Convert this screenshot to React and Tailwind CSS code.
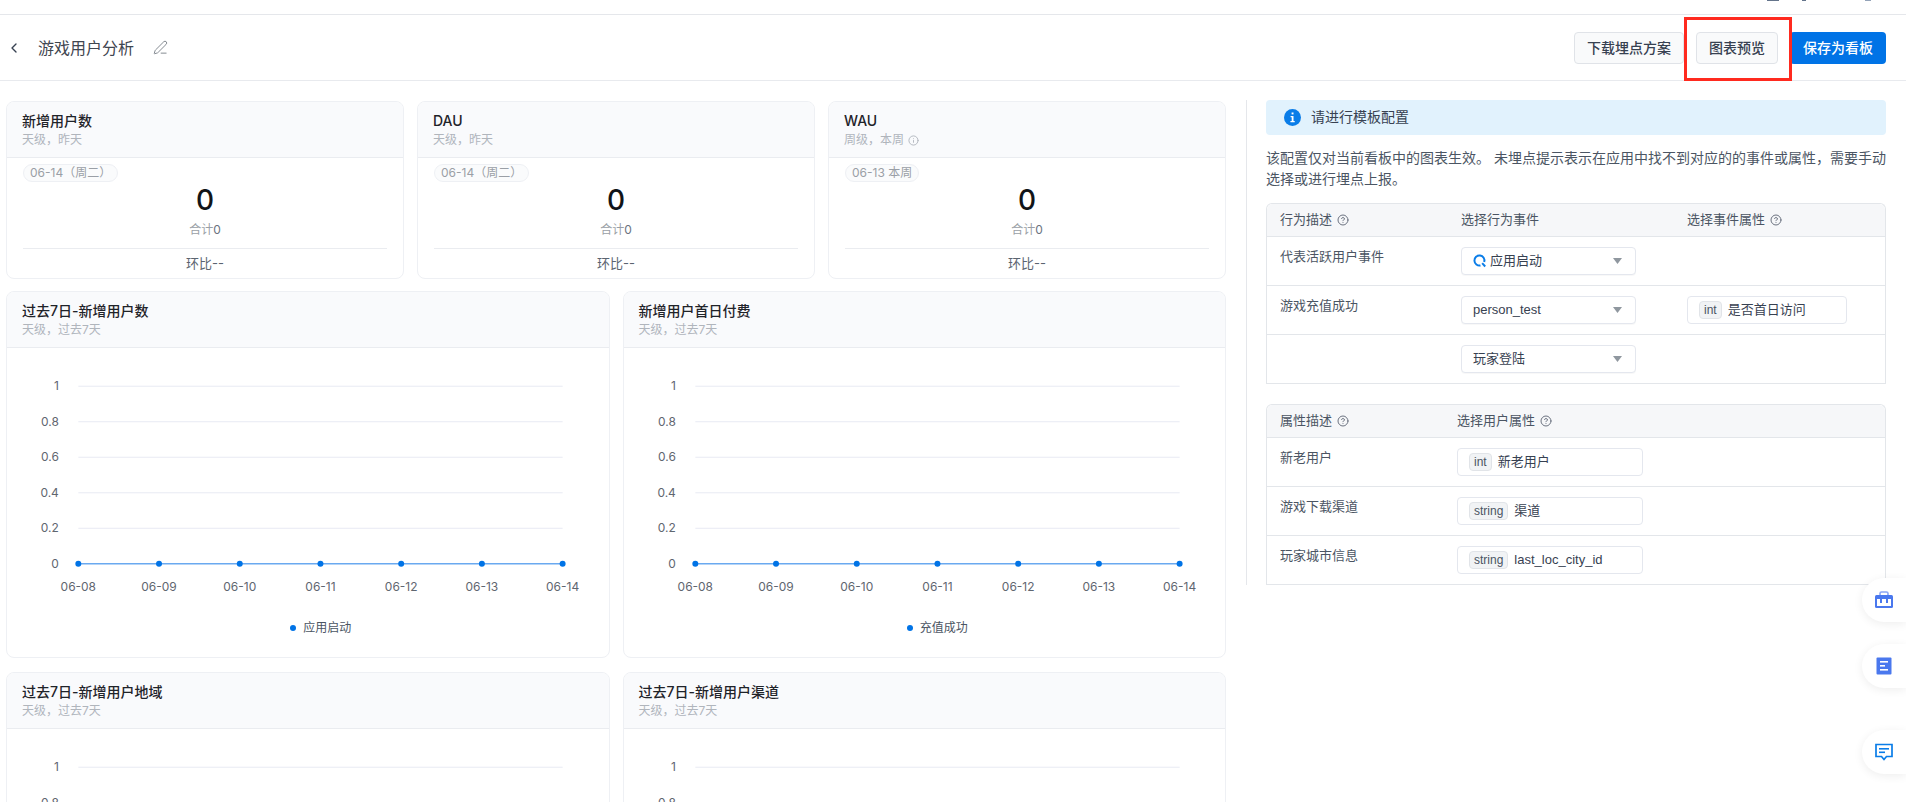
import React from 'react';
import { ChevronLeft, PenLine, CircleHelp, Info } from 'lucide-react';

const days = ['06-08', '06-09', '06-10', '06-11', '06-12', '06-13', '06-14'];
const ticks = ['1', '0.8', '0.6', '0.4', '0.2', '0'];

const StatCard = ({ title, sub, tag, hint }) => (
  <div className="h-[178px] rounded-lg border border-[#eef0f4] bg-white overflow-hidden">
    <div className="h-[56px] border-b border-[#eaecf0] bg-[#f9fafc] pl-[15px] pt-[9px]">
      <div className="text-[14px] leading-[20px] font-medium text-[#1f2329]">{title}</div>
      <div className="flex items-center gap-1 text-[12px] leading-[18px] text-[#b0b5bc]">
        {sub}
        {hint && <Info size={11} className="text-[#b0b5bc]" />}
      </div>
    </div>
    <div className="px-[16px] pt-[6px]">
      <div className="flex h-[18px] w-fit items-center rounded-full border border-[#eef0f4] bg-[#fafbfc] px-[6px] text-[12px] text-[#9a9fa6]">
        {tag}
      </div>
      <div className="-mt-[1px] text-center text-[28px] leading-[38px] font-medium text-[#111418]">0</div>
      <div className="mt-[2px] text-center text-[12px] leading-[18px] text-[#9a9fa6]">
        合计<span className="text-[#6b7280]">0</span>
      </div>
      <div className="mt-[9px] border-t border-[#eaecf0] pt-[4px] text-center text-[13px] leading-[20px] text-[#5b6470]">
        环比--
      </div>
    </div>
  </div>
);

const LineChart = () => {
  const left = 71.5;
  const right = 557;
  const top = 38;
  const step = 35.6;
  const gap = (right - left) / 6;
  return (
    <svg width="100%" height="266" viewBox="0 0 603 266" className="block">
      {ticks.map((t, i) => (
        <g key={t}>
          <text x="52" y={top + i * step + 4} textAnchor="end" fontSize="12" fill="#5f6670">{t}</text>
          {i < 5 && <line x1={left} x2={right} y1={top + i * step} y2={top + i * step} stroke="#e8eaf3" />}
        </g>
      ))}
      <line x1={left} x2={right} y1={top + 5 * step} y2={top + 5 * step} stroke="#6aa9f0" strokeWidth="1.5" />
      {days.map((d, i) => (
        <g key={d}>
          <circle cx={left + i * gap} cy={top + 5 * step} r="3" fill="#0073e6" />
          <text x={left + i * gap} y="243" textAnchor="middle" fontSize="12" fill="#5f6670">{d}</text>
        </g>
      ))}
    </svg>
  );
};

const ChartCard = ({ title, legend }) => (
  <div className="h-[367px] rounded-lg border border-[#eef0f4] bg-white overflow-hidden">
    <div className="h-[56px] border-b border-[#eaecf0] bg-[#f9fafc] pl-[15px] pt-[9px]">
      <div className="text-[14px] leading-[20px] font-medium text-[#1f2329]">{title}</div>
      <div className="text-[12px] leading-[18px] text-[#b0b5bc]">天级，过去7天</div>
    </div>
    <LineChart />
    <div className="mt-[4px] flex items-center justify-center gap-[7px] pl-[26px] text-[12px] leading-[20px] text-[#4b5563]">
      <span className="h-[6px] w-[6px] rounded-full bg-[#0073e6]"></span>
      {legend}
    </div>
  </div>
);

const Caret = () => (
  <svg width="9" height="6" viewBox="0 0 9 6" className="ml-auto">
    <path d="M0 0h9L4.5 6z" fill="#8f979f" />
  </svg>
);

const Select = ({ children }) => (
  <div className="flex h-[28px] w-[175px] items-center rounded border border-[#e4e7ee] bg-white pl-[11px] pr-[13px] text-[13px] text-[#374151] shadow-[0_1px_1px_rgba(0,0,0,0.03)]">
    {children}
    <Caret />
  </div>
);

const TypedInput = ({ type, name, width }) => (
  <div className={`flex h-[28px] items-center gap-[6px] rounded border border-[#e4e7ee] bg-white pl-[11px] text-[13px] text-[#374151] ${width}`}>
    <span className="flex h-[18px] items-center rounded-sm border border-[#e1e4e8] bg-[#f1f3f5] px-[4px] text-[12px] text-[#4b5563]">
      {type}
    </span>
    {name}
  </div>
);

const Help = ({ label }) => (
  <span className="flex items-center gap-[5px]">
    {label}
    <CircleHelp size={12} className="text-[#6b7280]" />
  </span>
);

const FloatButton = ({ children, className }) => (
  <div className={`absolute right-0 flex h-[44px] w-[44px] items-center rounded-l-[22px] bg-white pl-[12px] shadow-[0_2px_10px_rgba(0,0,0,0.07)] ${className}`}>
    {children}
  </div>
);

export default function App() {
  return (
    <div className="relative h-[802px] w-[1906px] overflow-hidden bg-white font-['Inter','Noto_Sans_CJK_SC',sans-serif]">
      {/* Cut off nav bar */}
      <div className="flex h-[15px] items-start justify-end border-b border-[#e5e7eb] pr-[35px]">
        <span className="h-[1px] w-[12px] bg-[#64748b]"></span>
        <span className="ml-[23px] h-[1px] w-[4px] bg-[#64748b]"></span>
        <span className="ml-[59px] h-[1px] w-[6px] bg-[#94a3b8]"></span>
      </div>

      {/* Header */}
      <div className="flex h-[66px] items-center border-b border-[#e8eaee] pr-[20px]">
        <ChevronLeft size={16} className="ml-[6px] text-[#374151]" />
        <span className="ml-[16px] text-[16px] text-[#3f4650]">游戏用户分析</span>
        <PenLine size={15} strokeWidth={1.5} className="ml-[19px] text-[#7d838b]" />
        <div className="ml-auto flex items-center gap-[12px]">
          <button className="h-[32px] w-[110px] rounded border border-[#e0e3e8] bg-[#f9fafb] text-[14px] font-medium text-[#374151]">
            下载埋点方案
          </button>
          <div className="relative">
            <button className="h-[32px] w-[82px] rounded border border-[#e0e3e8] bg-[#f9fafb] text-[14px] font-medium text-[#374151]">
              图表预览
            </button>
            <div className="absolute -left-[12px] -top-[15px] z-10 h-[64px] w-[108px] border-[3px] border-[#ff2a1f]"></div>
          </div>
          <button className="h-[32px] w-[96px] rounded bg-[#0073e6] text-[14px] font-medium text-white">
            保存为看板
          </button>
        </div>
      </div>

      {/* Body */}
      <div className="flex pl-[6px] pt-[20px]">
        <div className="w-[1220px] shrink-0">
          <div className="grid grid-cols-3 gap-[13px]">
            <StatCard title="新增用户数" sub="天级，昨天" tag="06-14（周二）" />
            <StatCard title="DAU" sub="天级，昨天" tag="06-14（周二）" />
            <StatCard title="WAU" sub="周级，本周" tag="06-13 本周" hint />
          </div>
          <div className="mt-[12px] grid grid-cols-2 gap-[13px]">
            <ChartCard title="过去7日-新增用户数" legend="应用启动" />
            <ChartCard title="新增用户首日付费" legend="充值成功" />
          </div>
          <div className="mt-[14px] grid grid-cols-2 gap-[13px]">
            <ChartCard title="过去7日-新增用户地域" legend="应用启动" />
            <ChartCard title="过去7日-新增用户渠道" legend="应用启动" />
          </div>
        </div>

        {/* Template config */}
        <div className="ml-[20px] -mt-[1px] h-[485px] w-[640px] border-l border-[#e5e7eb] pl-[19px] font-['Liberation_Sans','Noto_Sans_CJK_SC',sans-serif]">
          <div className="flex h-[35px] items-center rounded-sm bg-[#e1f2fd] pl-[18px] text-[14px] text-[#374151]">
            <svg width="17" height="17" viewBox="0 0 17 17" className="mr-[10px]">
              <circle cx="8.5" cy="8.5" r="8.5" fill="#0a7de8" />
              <rect x="7.6" y="3.5" width="1.9" height="1.9" fill="#fff" />
              <path d="M6.6 7h2.9v5h1.2v1.2H6.4V12h1.3V8.2H6.6z" fill="#fff" />
            </svg>
            请进行模板配置
          </div>
          <p className="mt-[13px] text-[14px] leading-[21px] text-[#4b5563]">
            该配置仅对当前看板中的图表生效。 未埋点提示表示在应用中找不到对应的的事件或属性，需要手动选择或进行埋点上报。
          </p>

          <div className="mt-[13px] rounded-t-md border-x border-t border-[#e3e6ea] text-[13px] text-[#4b5563]">
            <div className="flex h-[33px] items-center rounded-t-md border-b border-[#e3e6ea] bg-[#f6f7f9] pl-[13px]">
              <div className="w-[181px]"><Help label="行为描述" /></div>
              <div className="w-[226px]">选择行为事件</div>
              <Help label="选择事件属性" />
            </div>
            <div className="flex h-[49px] border-b border-[#e3e6ea] pl-[13px] pt-[10px]">
              <div className="w-[181px] leading-[20px]">代表活跃用户事件</div>
              <Select>
                <svg width="14" height="14" viewBox="0 0 14 14" className="mr-[3px]">
                  <path d="M7.5 11.4A5 5 0 1 1 11.2 8" fill="none" stroke="#0a7de8" strokeWidth="2" />
                  <path d="M9.2 9.2l3 3.3" fill="none" stroke="#0a7de8" strokeWidth="2" />
                </svg>
                应用启动
              </Select>
            </div>
            <div className="flex h-[49px] border-b border-[#e3e6ea] pl-[13px] pt-[10px]">
              <div className="w-[181px] leading-[20px]">游戏充值成功</div>
              <Select>person_test</Select>
              <div className="ml-[51px]"><TypedInput type="int" name="是否首日访问" width="w-[160px]" /></div>
            </div>
            <div className="flex h-[49px] border-b border-[#e3e6ea] pl-[194px] pt-[10px]">
              <Select>玩家登陆</Select>
            </div>
          </div>

          <div className="mt-[20px] rounded-t-md border-x border-t border-[#e3e6ea] text-[13px] text-[#4b5563]">
            <div className="flex h-[33px] items-center rounded-t-md border-b border-[#e3e6ea] bg-[#f6f7f9] pl-[13px]">
              <div className="w-[177px]"><Help label="属性描述" /></div>
              <Help label="选择用户属性" />
            </div>
            {[
              ['新老用户', 'int', '新老用户'],
              ['游戏下载渠道', 'string', '渠道'],
              ['玩家城市信息', 'string', 'last_loc_city_id'],
            ].map(([label, type, name]) => (
              <div key={label} className="flex h-[49px] border-b border-[#e3e6ea] pl-[13px] pt-[10px]">
                <div className="w-[177px] leading-[20px]">{label}</div>
                <TypedInput type={type} name={name} width="w-[186px]" />
              </div>
            ))}
          </div>
        </div>
      </div>

      {/* Floating tool buttons */}
      <FloatButton className="top-[578px]">
        <svg width="20" height="18" viewBox="0 0 20 18">
          <rect x="6" y="1" width="8" height="4" rx="1.5" fill="none" stroke="#8aa6f5" strokeWidth="1.6" />
          <rect x="1" y="4" width="18" height="13" rx="1.5" fill="#4a78ee" />
          <rect x="3" y="8" width="14" height="7" fill="#fff" />
          <rect x="6" y="8" width="2" height="4" fill="#4a78ee" />
          <rect x="12" y="8" width="2" height="4" fill="#4a78ee" />
        </svg>
      </FloatButton>
      <FloatButton className="top-[644px]">
        <svg width="20" height="18" viewBox="0 0 20 18">
          <rect x="2.5" y="0.5" width="15" height="17" rx="1" fill="#4a78ee" />
          <rect x="6" y="4" width="8" height="1.6" fill="#fff" />
          <rect x="6" y="8" width="5" height="1.6" fill="#fff" />
          <rect x="6" y="12" width="8" height="1.6" fill="#fff" />
        </svg>
      </FloatButton>
      <FloatButton className="top-[730px]">
        <svg width="20" height="18" viewBox="0 0 20 18">
          <path d="M2 1.5h16v12h-5.5L10 16.5l-2.5-3H2z" fill="none" stroke="#0a7de8" strokeWidth="1.7" />
          <rect x="5" y="5" width="10" height="1.6" fill="#0a7de8" />
          <rect x="5" y="8.5" width="6" height="1.6" fill="#0a7de8" />
        </svg>
      </FloatButton>
    </div>
  );
}
